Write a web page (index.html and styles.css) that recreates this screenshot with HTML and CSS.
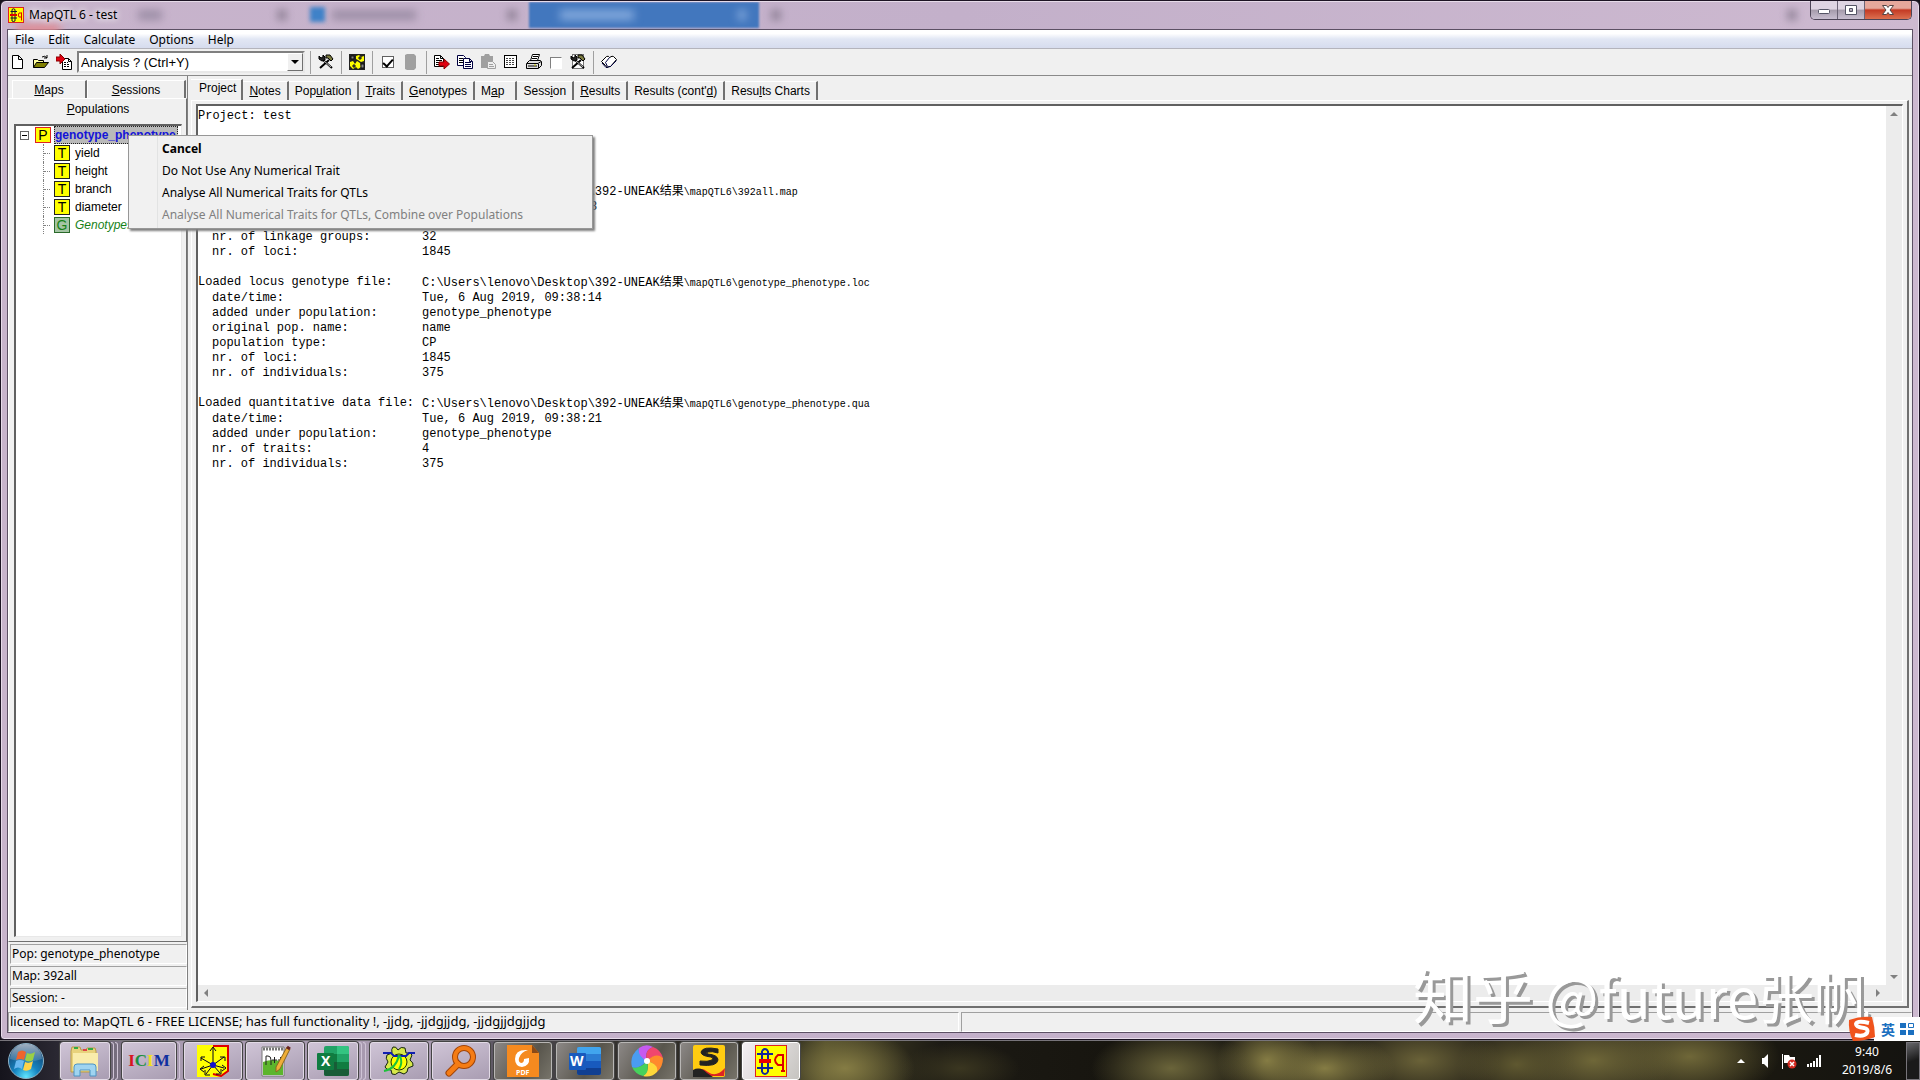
FILE: index.html
```
<!DOCTYPE html>
<html lang="en">
<head>
    <meta charset="UTF-8">
    <meta name="viewport" content="width=device-width, initial-scale=1.0">
    <title>MapQTL 6 - test</title>
    <link rel="stylesheet" href="styles.css">
</head>
<body>

<main class="window">
    <header class="titlebar">
        <div class="glass">
            <i class="smear red"></i>
            <i class="smear text one"></i>
            <i class="smear dot two"></i>
            <i class="smear blue three"></i>
            <i class="smear text four"></i>
            <i class="smear dot five"></i>
            <i class="smear tab six"></i>
            <i class="smear light seven"></i>
            <i class="smear light eight"></i>
            <i class="smear dot nine"></i>
            <i class="smear dot ten"></i>
        </div>
        <svg class="app-icon" width="16" height="16" viewBox="0 0 32 32"><rect x="1" y="1" width="30" height="30" fill="#ff0" stroke="#d22" stroke-width="2"/><path d="M8 5v23M14 5v23M5 9h13M5 22h13M8 5q3-3 6 0M8 28q3 2 6 0" fill="none" stroke="#113" stroke-width="2"/><path d="M4 16h14" stroke="#d00" stroke-width="4"/><path d="M27 11v16M27 12h-5q-3 4 0 8h5" fill="none" stroke="#d00" stroke-width="2"/></svg>
        <span class="title">MapQTL 6 - test</span>
        <div class="caption-buttons">
            <button class="cap" aria-label="Minimize"><svg width="14" height="12" viewBox="0 0 14 12"><rect x="1.500" y="5.500" width="11" height="4" rx="1" fill="#fff" stroke="#556"/></svg></button>
            <button class="cap" aria-label="Restore"><svg width="14" height="12" viewBox="0 0 14 12"><path d="M1.500 1.500h11v9h-11zM5.500 4.500v3h3v-3z" fill="#fff" fill-rule="evenodd" stroke="#556"/></svg></button>
            <button class="cap close" aria-label="Close"><svg width="14" height="12" viewBox="0 0 14 12"><path d="M1.500 1.500h4L7 3.500l1.500-2h4L9 6l3.500 4.500h-4L7 8.500l-1.500 2h-4L5 6z" fill="#fff" stroke="#544"/></svg></button>
        </div>
    </header>

    <div class="client">
        <nav class="menubar">
            <button>File</button>
            <button>Edit</button>
            <button>Calculate</button>
            <button>Options</button>
            <button>Help</button>
        </nav>

        <div class="toolbar">
            <button class="tool" aria-label="New"><svg width="16" height="16" viewBox="0 0 16 16"><path d="M2.500 1.500h6l4 4v9h-10zM8.500 1.500v4h4" fill="#fff" stroke="#000"/></svg></button>
            <button class="tool" aria-label="Open"><svg width="16" height="16" viewBox="0 0 16 16"><path d="M.5 13.500v-8h4l1 1h5v3" fill="#ffff9c" stroke="#000"/><path d="M.5 13.500l3-5h12l-4 5z" fill="#808000" stroke="#000"/><path d="M9 3q3-2 5 1M14 1v3h-3" fill="none" stroke="#000"/></svg></button>
            <button class="tool" aria-label="Load data"><svg width="16" height="16" viewBox="0 0 16 16"><path d="M6.500 4.500h6l3 3v8h-9zM12.500 4.500v3h3" fill="#fff" stroke="#000"/><path d="M8 8.500h4M8 10.500h6M8 12.500h6" stroke="#000" stroke-dasharray="2 1"/><path d="M0 3h4V0l5 5-5 5V7H0z" fill="#e00010" stroke="#800"/></svg></button>
            <label class="combo">
                <select aria-label="Analysis"><option>Analysis ? (Ctrl+Y)</option></select>
                <span class="combo-arrow"></span>
            </label>
            <span class="sep"></span>
            <button class="tool" aria-label="Settings"><svg width="16" height="16" viewBox="0 0 16 16"><path d="M5 6l9 8M11 6l-9 8" stroke="#000" stroke-width="2"/><path d="M6 7l7 6" stroke="#bbb"/><path d="M1 2l2 2 2-1V1l2 2v3L4 7 1 5z" fill="#222" stroke="#000"/><path d="M8 1h4l3 4-2 2-3-3H8z" fill="#7c7c40" stroke="#000"/></svg></button>
            <span class="sep"></span>
            <button class="tool" aria-label="Calculate"><svg width="16" height="16" viewBox="0 0 16 16"><rect width="16" height="16" fill="#222"/><path d="M1 8l3-1 2 3 2-3 3 2 1 4-3 2-2-2-3 2-3-3zM7 2l3-1 2 2 3-1v5l-3 1-3-2-2-1z" fill="#ff0"/><path d="M2 2h3v3H2zM10 3h2v2h-2zM4 11h2v2H4zM12 10h3v4h-3z" fill="#888" stroke="#111"/></svg></button>
            <span class="sep"></span>
            <input class="tick checked" type="checkbox" checked aria-label="Use trait">
            <button class="tool" disabled aria-label="Stop"><svg width="16" height="16" viewBox="0 0 16 16"><path d="M4 0h7l2 2v12l-2 2H4l-2-1V1z" fill="#a0a0a0"/></svg></button>
            <span class="sep"></span>
            <button class="tool" aria-label="Export"><svg width="16" height="16" viewBox="0 0 16 16"><path d="M.5 1.500h6l3 3v8h-9zM6.500 1.500v3h3" fill="#fff" stroke="#000"/><path d="M2 4.500h3M2 6.500h6M2 8.500h4M2 10.500h3" stroke="#000"/><path d="M5 8h5V5l5.500 5-5.500 5v-3H5z" fill="#e00010" stroke="#800"/></svg></button>
            <button class="tool" aria-label="Copy"><svg width="16" height="16" viewBox="0 0 16 16"><path d="M.5 1.500h6l2 2v8h-8z" fill="#fff" stroke="#000040"/><path d="M2 4.500h4M2 6.500h4M2 8.500h4" stroke="#000"/><path d="M6.500 4.500h6l3 3v7h-9zM12.500 4.500v3h3" fill="#fff" stroke="#000040"/><path d="M8 8.500h6M8 10.500h6M8 12.500h6" stroke="#000040"/></svg></button>
            <button class="tool" disabled aria-label="Paste"><svg width="16" height="16" viewBox="0 0 16 16"><path d="M1 2h3l1-2h4l1 2h3v12H1z" fill="#a0a0a0"/><path d="M7.500 7.500h5l3 3v4h-8z" fill="#eee" stroke="#a0a0a0"/><path d="M9 10.500h4M9 12.500h5" stroke="#a0a0a0"/></svg></button>
            <button class="tool" aria-label="Select all"><svg width="16" height="16" viewBox="0 0 16 16"><rect x="1.500" y="1.500" width="12" height="12" fill="#fff" stroke="#000"/><path d="M3 4.500h9M3 6.500h9M3 8.500h9M3 10.500h9" stroke="#444" stroke-dasharray="2 1"/></svg></button>
            <button class="tool" aria-label="Print"><svg width="16" height="16" viewBox="0 0 16 16"><path d="M4.500 6.500l2-6h7l-2 6" fill="#fff" stroke="#000"/><path d="M7 2.500h5M6 4.500h5" stroke="#000"/><path d="M.5 9.500l3-3h11l1 1v4l-3 3h-12z" fill="#ddd" stroke="#000"/><path d="M1 9.500h11l3-2M12.500 10v4M2 12h9" fill="none" stroke="#000"/><path d="M8 11h2" stroke="#cc0"/></svg></button>
            <input class="tick" type="checkbox" aria-label="Wrap lines">
            <button class="tool" aria-label="Options"><svg width="16" height="16" viewBox="0 0 16 16"><rect x="2.500" y=".5" width="11" height="14" fill="#fff" stroke="#777"/><path d="M5 6l9 8M11 6l-9 8" stroke="#000" stroke-width="2"/><path d="M6 7l7 6" stroke="#bbb"/><path d="M1 2l2 2 2-1V1l2 2v3L4 7 1 5z" fill="#222" stroke="#000"/><path d="M8 1h4l3 4-2 2-3-3H8z" fill="#7c7c40" stroke="#000"/></svg></button>
            <span class="sep"></span>
            <button class="tool" aria-label="Help"><svg width="16" height="16" viewBox="0 0 16 16"><path d="M.5 7.500l5-5q2-1 3 1 3-2 4-1l3 3-6 7q-1 0-3 1-1-2-2-2z" fill="#fff" stroke="#000"/><path d="M8.500 3.500l-4 5 2 4M1 9l4 4.500h1.500l1-1h2l6-6" fill="none" stroke="#000040"/></svg></button>
        </div>

        <div class="workspace">
            <aside class="sidebar">
                <div class="side-tabs">
                    <button><u>M</u>aps</button>
                    <button class="wide"><u>S</u>essions</button>
                </div>
                <section class="side-panel">
                    <button class="side-current"><u>P</u>opulations</button>
                    <ul class="tree">
                        <li class="root"><span class="minus"></span><span class="node pop">P</span><b>genotype_phenotype</b></li>
                        <li><span class="node">T</span>yield</li>
                        <li><span class="node">T</span>height</li>
                        <li><span class="node">T</span>branch</li>
                        <li><span class="node">T</span>diameter</li>
                        <li class="geno"><span class="node">G</span>Genotypes</li>
                    </ul>
                </section>
                <p class="info">Pop: genotype_phenotype</p>
                <p class="info">Map: 392all</p>
                <p class="info">Session: -</p>
            </aside>

            <section class="content">
                <div class="tabs">
                    <button class="active">Pro<u>j</u>ect</button>
                    <button><u>N</u>otes</button>
                    <button>Pop<u>u</u>lation</button>
                    <button><u>T</u>raits</button>
                    <button><u>G</u>enotypes</button>
                    <button class="map-tab">M<u>a</u>p</button>
                    <button>Sess<u>i</u>on</button>
                    <button><u>R</u>esults</button>
                    <button>Results (cont'<u>d</u>)</button>
                    <button>Resu<u>l</u>ts Charts</button>
                </div>
                <div class="page">
                    <div class="report">
                        <div class="log">
                            <div class="line">Project: test</div>
                            <div class="line"></div>
                            <div class="line"></div>
                            <div class="line"></div>
                            <div class="line"></div>
                            <div class="line path"><span></span><span>C:\Users\lenovo\Desktop\392-UNEAK<span class="cjk">结果</span><small>\mapQTL6\392all.map</small></span></div>
                            <div class="line"><span></span><span class="seconds">8</span></div>
                            <div class="line"></div>
                            <div class="line sub"><span>nr. of linkage groups:</span><span>32</span></div>
                            <div class="line sub"><span>nr. of loci:</span><span>1845</span></div>
                            <div class="line"></div>
                            <div class="line path"><span>Loaded locus genotype file:</span><span>C:\Users\lenovo\Desktop\392-UNEAK<span class="cjk">结果</span><small>\mapQTL6\genotype_phenotype.loc</small></span></div>
                            <div class="line sub"><span>date/time:</span><span>Tue, 6 Aug 2019, 09:38:14</span></div>
                            <div class="line sub"><span>added under population:</span><span>genotype_phenotype</span></div>
                            <div class="line sub"><span>original pop. name:</span><span>name</span></div>
                            <div class="line sub"><span>population type:</span><span>CP</span></div>
                            <div class="line sub"><span>nr. of loci:</span><span>1845</span></div>
                            <div class="line sub"><span>nr. of individuals:</span><span>375</span></div>
                            <div class="line"></div>
                            <div class="line path"><span>Loaded quantitative data file:</span><span>C:\Users\lenovo\Desktop\392-UNEAK<span class="cjk">结果</span><small>\mapQTL6\genotype_phenotype.qua</small></span></div>
                            <div class="line sub"><span>date/time:</span><span>Tue, 6 Aug 2019, 09:38:21</span></div>
                            <div class="line sub"><span>added under population:</span><span>genotype_phenotype</span></div>
                            <div class="line sub"><span>nr. of traits:</span><span>4</span></div>
                            <div class="line sub"><span>nr. of individuals:</span><span>375</span></div>
                        </div>
                        <div class="vscroll"><i class="arrow up"></i><i class="arrow down"></i></div>
                        <div class="hscroll"><i class="arrow left"></i><i class="arrow right"></i></div>
                    </div>
                </div>
            </section>
        </div>

        <footer class="statusbar">
            <span>licensed to: MapQTL 6 - FREE LICENSE; has full functionality !, -jjdg, -jjdgjjdg, -jjdgjjdgjjdg</span>
            <span></span>
        </footer>
    </div>
</main>

<div class="popup" role="menu">
    <button role="menuitem"><b>Cancel</b></button>
    <button role="menuitem">Do Not Use Any Numerical Trait</button>
    <button role="menuitem">Analyse All Numerical Traits for QTLs</button>
    <button role="menuitem" disabled>Analyse All Numerical Traits for QTLs, Combine over Populations</button>
</div>

<div class="taskbar">
    <button class="start" aria-label="Start">
        <svg width="38" height="38" viewBox="0 0 38 38">
            <defs>
                <radialGradient id="orb" cx=".5" cy=".95" r=".9"><stop offset="0" stop-color="#5fe6ff"/><stop offset=".4" stop-color="#1583c0"/><stop offset="1" stop-color="#143d68"/></radialGradient>
                <linearGradient id="shine" x1="0" y1="0" x2="0" y2="1"><stop offset="0" stop-color="#fff" stop-opacity=".6"/><stop offset="1" stop-color="#fff" stop-opacity=".1"/></linearGradient>
            </defs>
            <circle cx="19" cy="19" r="17.500" fill="url(#orb)" stroke="#8fb4c8"/>
            <path d="M3 17a16 15 0 0 1 32 0q-16 6-32 0z" fill="url(#shine)"/>
            <path d="M11 10q4-3 8 0l-2 8q-4-2-8 0z" fill="#f0642c"/>
            <path d="M20 11q4 2 8-1l-2 8q-4 3-8 0z" fill="#9bd045"/>
            <path d="M9 19q4-2 8 0l-2 8q-4-3-8 0z" fill="#69b8f0"/>
            <path d="M18 20q4 2 8-1l-2 8q-4 3-8 1z" fill="#ffd348"/>
        </svg>
    </button>
    <div class="task stack"><button aria-label="Explorer"><svg width="32" height="32" viewBox="0 0 32 32"><path d="M2 6l1-4h8l1 3h5l1-2h8l1 3v21H2z" fill="#e8d27c" stroke="#b89c48"/><path d="M4 8h25v18H4z" fill="#f9ecab"/><path d="M5 3h4M19 4h5" stroke="#3a4" stroke-width="2"/><path d="M14 5h4" stroke="#d44" stroke-width="2"/><path d="M5 31V22q0-3 3-3h16q3 0 3 3v9h-6v-6H11v6z" fill="#9fd4f0" stroke="#4c94c4"/></svg></button><i></i><i></i></div>
    <div class="task stack"><button aria-label="ICIM"><span class="icim"><b>I</b><b>C</b><b>I</b><b>M</b></span></button><i></i></div>
    <div class="task"><button aria-label="Axes"><svg width="32" height="32" viewBox="0 0 32 32"><path d="M0 0h32v26l-8 6H0z" fill="#ff0"/><path d="M16 1h15v25l-7 5-8-2" fill="none" stroke="#d00" stroke-width="2"/><path d="M16 20V3M16 20L4 13M16 20l11-8M16 20L4 24M16 20l11 3M16 20l-7 9M16 20l7 8" stroke="#002"/><path d="M13 6l3-4 3 4M4 16v-4h4M23 12h5v4M7 21l-4 3 4 3M25 20l4 3-4 3M8 25v5h5M24 24v5h-5" fill="none" stroke="#002"/><circle cx="16" cy="20" r="3" fill="#11c"/></svg></button></div>
    <div class="task"><button aria-label="Notepad++"><svg width="32" height="32" viewBox="0 0 32 32"><path d="M3 2h22v29H3z" fill="#fff" stroke="#777"/><path d="M4 17q10-4 20 0v13H4z" fill="#5cb52c"/><path d="M4 4h20" stroke="#777" stroke-width="3" stroke-dasharray="2 1"/><path d="M7 20v-9h2q3 0 3 4v5M13 15h5M15.500 12v6M19 15h5M21.500 12v6" fill="none" stroke="#222"/><path d="M28 2l3 2-10 20-4 3v-5z" fill="#efae38" stroke="#8b6722"/><path d="M28 2l3 2" stroke="#622" stroke-width="3"/></svg></button></div>
    <div class="task stack"><button aria-label="Excel"><svg width="32" height="32" viewBox="0 0 32 32"><rect x="7" y="1" width="25" height="30" rx="2" fill="#21a366"/><path d="M7 9h13v8H7z" fill="#107c41"/><path d="M20 1h10q2 0 2 2v6H20z" fill="#33c481"/><path d="M7 17h25v12q0 2-2 2H9q-2 0-2-2z" fill="#185c37"/><path d="M20 17h12v7H20z" fill="#107c41"/><rect y="8" width="17" height="17" rx="1" fill="#107c41"/><text x="4" y="21" font-family="Open Sans" font-size="14" font-weight="bold" fill="#fff">X</text></svg></button><i></i><i></i></div>
    <div class="task"><button aria-label="Globe"><svg width="32" height="32" viewBox="0 0 32 32"><path d="M10 2q3-1 5 3 3-4 7-2l1 5q5-1 6 2l-2 5q4 3 3 6l-5 2q0 5-4 6l-5-2q-4 4-7 2l-1-4q-5 0-6-3l3-5q-3-4-1-7l5-2q-1-4 1-6z" fill="#d8e84a" stroke="#121"/><circle cx="16" cy="17" r="8" fill="#ff0" stroke="#230"/><path d="M0 8h8l3 3h12l3-3h6" fill="none" stroke="#1020b0" stroke-width="2"/><path d="M1 26q12-2 15-16M16 24q4-6 1-13" fill="none" stroke="#1cc23a" stroke-width="2"/></svg></button></div>
    <div class="task"><button aria-label="Search"><svg width="32" height="32" viewBox="0 0 32 32"><circle cx="19" cy="12" r="9" fill="none" stroke="#a04408" stroke-width="6"/><path d="M13 19L4 28" stroke="#a04408" stroke-width="7" stroke-linecap="round"/><circle cx="19" cy="12" r="9" fill="none" stroke="#f57c14" stroke-width="4"/><path d="M13 19L4 28" stroke="#f57c14" stroke-width="5" stroke-linecap="round"/></svg></button></div>
    <div class="task dark"><button aria-label="PDF"><svg width="32" height="32" viewBox="0 0 32 32"><path d="M0 0h25l7 8v24H0z" fill="#f58a1f"/><path d="M25 0v8h7z" fill="#8a4a18"/><path d="M21 5q-13-1-13 9 0 7 7 8 8-1 7-9l-5 1q0 4-3 4-3-1-2-5 2-6 9-8z" fill="#fff"/><text x="9" y="30" font-family="Open Sans" font-size="7" font-weight="bold" fill="#fff">PDF</text></svg></button></div>
    <div class="task dark"><button aria-label="Word"><svg width="32" height="32" viewBox="0 0 32 32"><rect x="8" y="2" width="24" height="28" rx="2" fill="#2b7cd3"/><path d="M8 4q0-2 2-2h20q2 0 2 2v5H8z" fill="#41a5ee"/><path d="M8 16h24v7H8z" fill="#185abd"/><path d="M8 23h24v5q0 2-2 2H10q-2 0-2-2z" fill="#103f91"/><rect y="8" width="17" height="17" rx="1" fill="#185abd"/><text x="1" y="21" font-family="Open Sans" font-size="14" font-weight="bold" fill="#fff">W</text></svg></button></div>
    <div class="task dark"><button aria-label="Pinwheel"><svg width="32" height="32" viewBox="0 0 32 32"><path d="M16 16Q5 13 8 3q7-5 14-1-9 3-6 14z" fill="#c65af0"/><path d="M16 16Q13 5 22 2q8 3 10 11-7-5-16 3z" fill="#f0466e"/><path d="M16 16q9-9 16-3 0 9-6 14 0-9-10-11z" fill="#ff8a2c"/><path d="M16 16q12 3 10 11-6 6-14 4 7-5 4-15z" fill="#ffd83a"/><path d="M16 16q3 12-4 15-8-2-11-9 8 2 15-6z" fill="#46d25c"/><path d="M16 16Q7 25 1 22-2 11 8 3q-2 8 8 13z" fill="#4a9cf2"/><circle cx="16" cy="16" r="3" fill="#fff"/></svg></button></div>
    <div class="task dark"><button aria-label="S"><svg width="32" height="32" viewBox="0 0 32 32"><rect width="32" height="32" rx="2" fill="#fc1"/><path d="M25 4q-15-3-17 3 0 4 10 5 3 1 1 3-4 2-12 1v4q17 2 18-5 0-5-10-6-3-1 0-2 4-1 10 1z" fill="#222" stroke="#222"/><path d="M0 26q8-5 15 1 8 6 17-4l-1 8H0z" fill="#d22"/><path d="M0 32V25q7-4 14 3l6 4z" fill="#222"/></svg></button></div>
    <div class="task current"><button aria-label="MapQTL"><svg width="32" height="32" viewBox="0 0 32 32"><rect x=".5" y=".5" width="31" height="31" fill="#ff0" stroke="#d22"/><path d="M7 6v21M13 6v21M2 9h16M2 23h16M7 6q3-4 6 0M7 27q3 4 6 0" fill="none" stroke="#12269c" stroke-width="2"/><path d="M4 16h12" stroke="#e00" stroke-width="4"/><path d="M28 9v17M26 26h4M28 10h-5q-6 5 0 10h4" fill="none" stroke="#d00" stroke-width="2"/></svg></button></div>

    <div class="tray">
        <svg width="16" height="16" viewBox="0 0 16 16"><path d="M4 10l4-4 4 4z" fill="#fff"/></svg>
        <svg width="16" height="16" viewBox="0 0 16 16"><path d="M5 5h2l4-4v14l-4-4H5z" fill="#fff"/></svg>
        <svg width="16" height="16" viewBox="0 0 16 16"><path d="M1.500 1v15" stroke="#fff"/><path d="M3 2h5l1 2h5v7H8l-1-1H3z" fill="#fff"/><circle cx="11" cy="11" r="4.500" fill="#d42a20"/><path d="M9 9l4 4M13 9l-4 4" stroke="#fff" stroke-width="1.500"/></svg>
        <svg width="16" height="16" viewBox="0 0 16 16"><path d="M2 11h2v3H2zM5 10h2v4H5zM8 8h2v6H8zM11 5h2v9h-2zM14 2h2v12h-2z" fill="#fff"/></svg>
    </div>
    <div class="clock"><span>9:40</span><span>2019/8/6</span></div>
    <button class="show-desktop" aria-label="Show desktop"></button>
</div>

<div class="watermark"><span>知乎</span> @future张帆</div>

<div class="ime">
    <svg width="28" height="26" viewBox="0 0 28 26"><path d="M1 4Q12 0 24 1q3 10 3 20-10 4-22 4Q0 15 1 4z" fill="#f0531c"/><path d="M21 7q-12-3-13 1 0 3 8 4 5 1 3 5-3 4-12 2" fill="none" stroke="#fff" stroke-width="4"/></svg>
    <span>英</span>
    <svg class="grid" width="14" height="14" viewBox="0 0 14 14"><path d="M0 1h6v5H0zM0 8h6v5H0zM8 8h6v5H8z" fill="#1b70c0"/><path d="M8.500 1.500h5v4h-5z" fill="#fff" stroke="#1b70c0"/></svg>
</div>

</body>
</html>
```
FILE: styles.css
```
* {
    box-sizing: border-box;
}

body {
    margin: 0;
    height: 100vh;
    display: flex;
    flex-direction: column;
    overflow: hidden;
    background-color: #15121a;
    color: #000;
    font-family: "Noto Sans", "Noto Sans CJK SC", sans-serif;
    font-size: 12px;
}

button {
    font: inherit;
    color: inherit;
    background: none;
    border: none;
    padding: 0;
    margin: 0;
    white-space: nowrap;
}

p,
ul {
    margin: 0;
    padding: 0;
    list-style: none;
}

svg {
    display: block;
    flex: none;
}

/* window frame */
.window {
    flex: 1;
    min-height: 0;
    display: flex;
    flex-direction: column;
    padding: 0 7px 7px;
    border: 1px solid #1d1424;
    border-radius: 6px 6px 4px 4px;
    background: linear-gradient(90deg, #c8b4cc, #c3b0ca 50%, #cdb9d0);
    box-shadow: inset 0 0 0 1px #e6dbe9;
    overflow: hidden;
}

.titlebar {
    position: relative;
    flex: none;
    height: 29px;
    padding-bottom: 2px;
    display: flex;
    align-items: center;
    gap: 5px;
}

.app-icon,
.title {
    position: relative;
}

.title {
    text-shadow: 0 0 6px #fff, 0 0 8px #fff;
}

.caption-buttons {
    position: relative;
    align-self: flex-start;
    margin-left: auto;
    display: flex;
    height: 19px;
    border: 1px solid #4c4456;
    border-top: none;
    border-radius: 0 0 5px 5px;
    overflow: hidden;
}

.cap {
    width: 27px;
    display: flex;
    align-items: center;
    justify-content: center;
    border-right: 1px solid #6c6476;
    background: linear-gradient(#ded4e2 45%, #a59bab 50%, #c8bed0);
}

.cap.close {
    width: 46px;
    border-right: none;
    background: linear-gradient(#e6a89c 40%, #c43a24 50%, #dc7050);
}

/* tabs of the browser behind the glass */
.glass {
    position: absolute;
    inset: 1px 0 0;
    overflow: hidden;
}

.smear {
    position: absolute;
    top: 8px;
    height: 10px;
    filter: blur(4px);
}

.smear.text { background: #9c8ea6; }
.smear.dot { width: 8px; background: #84788c; }
.smear.light { background: #82a8dc; }
.smear.blue { top: 5px; height: 15px; width: 15px; background: #3f82c8; filter: blur(2px); }
.smear.red { left: 8px; top: 22px; width: 44px; background: #e08890; }
.smear.tab { top: 0; height: 26px; background: #4277be; filter: blur(1px); }
.one { left: 130px; width: 24px; }
.two { left: 270px; }
.three { left: 302px; }
.four { left: 324px; width: 84px; }
.five { left: 500px; }
.six { left: 521px; width: 230px; }
.seven { left: 552px; width: 74px; }
.eight { left: 730px; width: 8px; }
.nine { left: 764px; }
.ten { right: 116px; }

.client {
    flex: 1;
    min-height: 0;
    display: flex;
    flex-direction: column;
    background-color: #f0f0f0;
    box-shadow: 0 0 0 1px #5c5064;
}

.menubar {
    flex: none;
    display: flex;
    gap: 14px;
    height: 19px;
    padding-left: 7px;
    background: linear-gradient(#fff 20%, #e2e7f4 50%, #d6dcee);
    border-bottom: 1px solid #b4b4bc;
}

/* toolbar */
.toolbar {
    flex: none;
    display: flex;
    align-items: center;
    gap: 7px;
    height: 27px;
    padding: 0 2px;
    border-bottom: 1px solid #8a8a8a;
}

.combo {
    position: relative;
    width: 228px;
    height: 22px;
    margin: 0 -2px;
}

.combo select {
    appearance: none;
    width: 100%;
    height: 100%;
    padding: 0 2px;
    border: 2px solid;
    border-color: #808080 #e8e8e8 #e8e8e8 #808080;
    border-radius: 0;
    background-color: #fff;
    color: #000;
    font: 13px "Liberation Sans", sans-serif;
}

.combo-arrow {
    position: absolute;
    top: 2px;
    right: 2px;
    width: 16px;
    height: 18px;
    display: flex;
    align-items: center;
    justify-content: center;
    background-color: #f0f0f0;
    border: 1px solid;
    border-color: #fff #707070 #707070 #fff;
    pointer-events: none;
}

.combo-arrow::after {
    content: "";
    border: 4px solid transparent;
    border-top-color: #000;
    border-bottom: none;
}

.sep {
    width: 1px;
    height: 23px;
    background-color: #a0a0a0;
}

.tick {
    appearance: none;
    width: 12px;
    height: 12px;
    margin: 2px 1px 0;
    background-color: #fff;
    border: 1px solid;
    border-color: #808080 #fff #fff #808080;
}

.tick.checked {
    margin: 0 2px;
    border-color: #606060;
    display: flex;
    justify-content: center;
}

.tick.checked::after {
    content: "";
    width: 4px;
    height: 8px;
    border: solid #000;
    border-width: 0 2px 2px 0;
    transform: rotate(42deg);
}

.workspace {
    flex: 1;
    min-height: 0;
    display: flex;
    gap: 3px;
    font-family: "Liberation Sans", sans-serif;
}

/* left side */
.sidebar {
    flex: none;
    width: 180px;
    display: flex;
    flex-direction: column;
    padding: 4px 0 2px;
    border-right: 1px solid #808080;
}

.side-tabs {
    display: flex;
    height: 18px;
    padding: 0 1px 0 4px;
}

.side-tabs button {
    flex: 3;
    border-top: 1px solid #fff;
    border-left: 1px solid #fff;
    border-right: 2px solid #707070;
}

.side-tabs .wide {
    flex: 4;
}

.side-panel {
    flex: 1;
    min-height: 0;
    display: flex;
    flex-direction: column;
    padding: 0 4px 4px 5px;
    border: 1px solid;
    border-color: #fff #707070 #707070 #fff;
}

.side-current {
    height: 25px;
    padding-bottom: 5px;
}

.tree {
    flex: 1;
    overflow: hidden;
    background-color: #fff;
    border: 1px solid;
    border-color: #606060 #e8e8e8 #e8e8e8 #606060;
    border-width: 2px 1px 1px 2px;
}

.tree li {
    display: flex;
    align-items: center;
    gap: 4px;
    height: 18px;
    margin-left: 27px;
    border-left: 1px dotted #808080;
}

.tree li::before {
    content: "";
    width: 6px;
    border-top: 1px dotted #808080;
}

.tree .root {
    gap: 6px;
    margin-left: 4px;
    border-left: none;
}

.tree .root::before {
    display: none;
}

.root b {
    flex: 1;
    margin-left: -4px;
    margin-right: 3px;
    line-height: 16px;
    overflow: hidden;
    color: #1414d8;
    background-color: #b9b9b9;
    border: 1px dotted #222;
}

.minus {
    width: 9px;
    height: 9px;
    flex: none;
    border: 1px solid #666;
    background: linear-gradient(#000, #000) center / 5px 1px no-repeat;
}

.node {
    width: 16px;
    height: 16px;
    margin-right: 1px;
    flex: none;
    background-color: #ff0;
    border: 1px solid #222;
    text-align: center;
    line-height: 14px;
    font-size: 14px;
}

.node.pop {
    border-color: #d22;
}

.tree .geno {
    color: #178217;
    font-style: italic;
}

.geno .node {
    background-color: #a4c4a4;
    border-color: #2a6a2a;
    font-style: normal;
}

.info {
    margin: 2px 0 0 2px;
    height: 20px;
    padding-left: 1px;
    line-height: 17px;
    border: 1px solid;
    border-color: #a0a0a0 #fff #fff #a0a0a0;
    font-family: "Noto Sans", sans-serif;
}

/* right side */
.content {
    flex: 1;
    min-width: 0;
    display: flex;
    flex-direction: column;
    padding: 3px 3px 2px 0;
}

.tabs {
    display: flex;
    align-items: flex-end;
    height: 21px;
}

.tabs button {
    height: 19px;
    padding: 0 6px;
    border-top: 1px solid #fff;
    border-right: 2px solid #707070;
}

.tabs .active {
    height: 21px;
    padding: 0 5px 4px 8px;
}

.tabs .map-tab {
    padding-right: 11px;
}

.page {
    flex: 1;
    min-height: 0;
    display: flex;
    padding: 3px 4px 4px;
    border: 1px solid;
    border-color: #fff #707070 #707070 #fff;
    border-width: 1px 2px 2px 1px;
}

.report {
    flex: 1;
    display: grid;
    grid-template: 1fr 16px / 1fr 16px;
    background-color: #f0f0f0;
    border: 1px solid;
    border-color: #606060 #fff #fff #606060;
    border-width: 2px 1px 1px 2px;
}

.log {
    padding-top: 3px;
    overflow: hidden;
    background-color: #fff;
    font: 12px/15px "Liberation Mono", "Noto Sans CJK SC", monospace;
}

.line {
    display: grid;
    grid-template-columns: 224px 1fr;
    height: 15px;
    white-space: nowrap;
}

.line.path {
    height: 16px;
}

.line.sub span:first-child {
    padding-left: 14px;
}

.seconds {
    padding-left: 168px;
}

.cjk {
    font-family: "Noto Sans CJK SC", sans-serif;
    line-height: 12px;
}

.line small {
    font-size: 10px;
}

.vscroll,
.hscroll {
    display: flex;
    align-items: center;
    justify-content: space-between;
    padding: 6px;
    background-color: #ececec;
}

.vscroll {
    flex-direction: column;
}

.hscroll {
    grid-column: 1 / 3;
    padding-right: 22px;
}

.arrow {
    border: 4px solid transparent;
}

.arrow.up { border-top: none; border-bottom-color: #808080; }
.arrow.down { border-bottom: none; border-top-color: #808080; }
.arrow.left { border-left: none; border-right-color: #808080; }
.arrow.right { border-right: none; border-left-color: #808080; }

.statusbar {
    flex: none;
    display: flex;
    gap: 2px;
    height: 22px;
    padding-top: 2px;
}

.statusbar span {
    flex: 1;
    padding-left: 1px;
    line-height: 17px;
    font-size: 13px;
    border: 1px solid;
    border-color: #a0a0a0 #fff #fff #a0a0a0;
}

/* context menu */
.popup {
    position: absolute;
    left: 128px;
    top: 135px;
    width: 465px;
    display: flex;
    flex-direction: column;
    padding: 1px 2px 3px;
    border: 1px solid #979797;
    background: linear-gradient(90deg, #f1f1f1 28px, #e2e3e3 28px, #e2e3e3 29px, #f0f0f0 29px);
    box-shadow: 2px 2px 2px #808080;
}

.popup button {
    height: 22px;
    padding-left: 31px;
    text-align: left;
}

.popup button:disabled {
    color: #808080;
}

/* taskbar */
.taskbar {
    flex: none;
    height: 40px;
    display: flex;
    align-items: center;
    gap: 4px;
    border-top: 1px solid #77747a;
    background:
        radial-gradient(70px 40px at 44% 70%, #857c44, transparent),
        radial-gradient(60px 26px at 50% 70%, #3a3620, transparent),
        radial-gradient(80px 40px at 61% 70%, #6a643a, transparent),
        radial-gradient(50px 40px at 66% 50%, #857c44, transparent),
        radial-gradient(70px 36px at 69% 70%, #857c44, transparent),
        radial-gradient(80px 40px at 74% 50%, #6a6238, transparent),
        radial-gradient(60px 36px at 79% 60%, #5f5830, transparent),
        radial-gradient(80px 44px at 83% 50%, #6f6738, transparent),
        radial-gradient(90px 44px at 88% 40%, #6f6738, transparent),
        linear-gradient(90deg, #15141c, #2a2832 3%, #a89ab0 8%, #a89ab0 23%, #55505a 26%, #34312e 32%, #28261c 41%, #4c4828 43%, #1c1a14 49%, #17150f 58%, #2c281c 84%, #1a1810 91%, #141310);
}

.start {
    width: 56px;
    display: flex;
    justify-content: center;
    padding-right: 4px;
}

.task {
    width: 58px;
    height: 38px;
    display: flex;
    gap: 1px;
}

.task button {
    flex: 1;
    display: flex;
    align-items: center;
    justify-content: center;
    border: 1px solid #e2dae6;
    border-radius: 3px;
    background: linear-gradient(160deg, #cfc4d6, #a99db2);
    box-shadow: 0 0 0 1px #444;
}

.task.dark button {
    border-color: #b8b6b4;
    background: linear-gradient(120deg, #8c8886, #58554c 60%, #77746a);
}

.task.current button {
    border-color: #fff;
    background: linear-gradient(120deg, #f4f0f4, #c6c4c0);
}

.task i {
    width: 3px;
    border: 1px solid #cfc4d6;
    border-left: none;
    border-radius: 0 3px 3px 0;
}

.icim {
    font: bold 17px "Liberation Serif", serif;
    display: flex;
}

.icim b:nth-child(1) { color: #d81420; }
.icim b:nth-child(2) { color: #1c9040; }
.icim b:nth-child(3) { color: #f0e020; }
.icim b:nth-child(4) { color: #1030a0; }

.tray {
    display: flex;
    align-items: center;
    gap: 8px;
    margin-left: auto;
    margin-right: 7px;
}

.clock {
    width: 70px;
    display: flex;
    flex-direction: column;
    align-items: center;
    color: #fff;
    line-height: 18px;
}

.show-desktop {
    width: 14px;
    height: 38px;
    border: 1px solid #77747a;
    background: linear-gradient(160deg, #66666a, #1a1a1a 50%);
}

.watermark {
    position: absolute;
    right: 50px;
    top: 955px;
    color: #fff;
    font: 56px/76px "Noto Sans CJK SC", sans-serif;
    text-shadow: 3px 3px 0 #999;
    white-space: pre;
    pointer-events: none;
}

.watermark span {
    font-size: 60px;
}

.ime {
    position: absolute;
    right: 0;
    top: 1017px;
    height: 24px;
    display: flex;
    align-items: center;
    gap: 5px;
    padding-right: 6px;
    background: linear-gradient(90deg, transparent 26px, #fff 26px);
    color: #1b70c0;
    font: bold 14px "Noto Sans CJK SC", sans-serif;
}
```
